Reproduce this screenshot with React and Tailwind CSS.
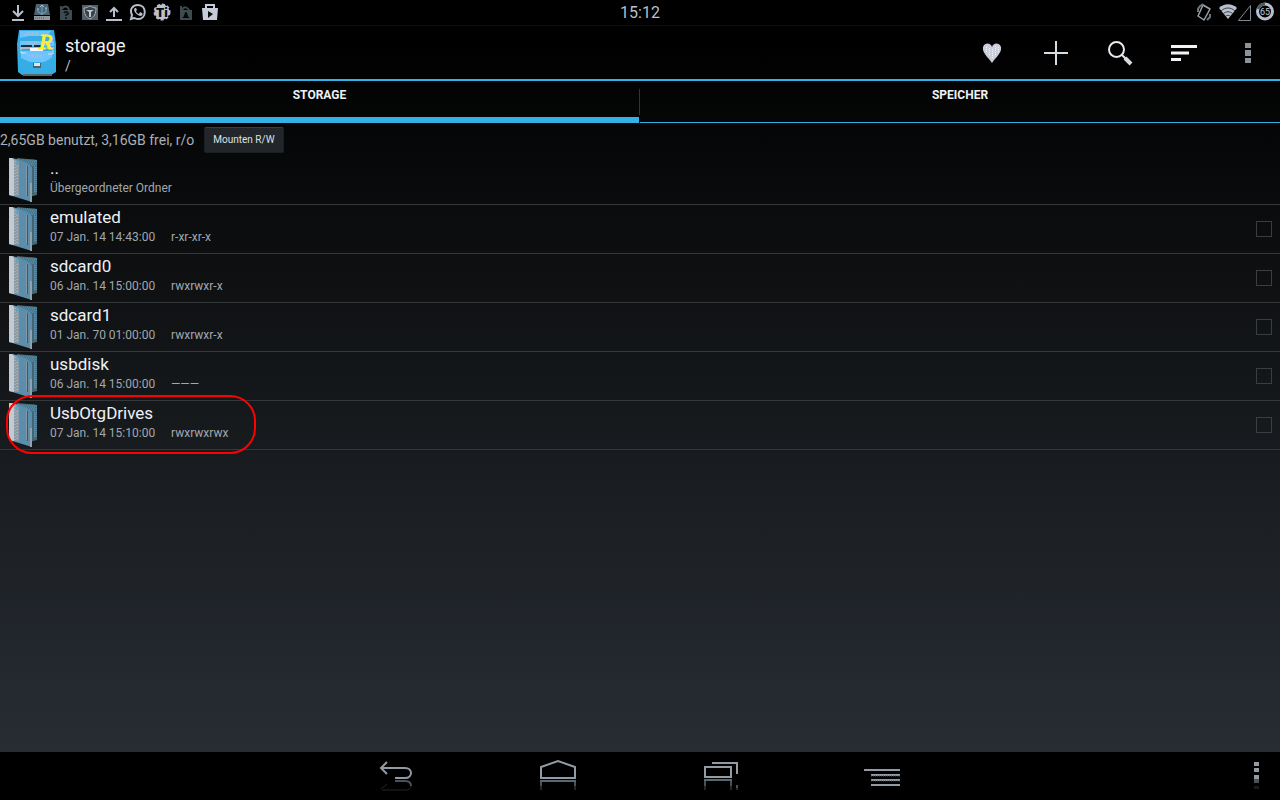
import { useState } from "react";

const TABS = ["STORAGE", "SPEICHER"];

const ENTRIES = [
  { name: "emulated", date: "07 Jan. 14 14:43:00", mode: "r-xr-xr-x" },
  { name: "sdcard0", date: "06 Jan. 14 15:00:00", mode: "rwxrwxr-x" },
  { name: "sdcard1", date: "01 Jan. 70 01:00:00", mode: "rwxrwxr-x" },
  { name: "usbdisk", date: "06 Jan. 14 15:00:00", mode: "———" },
  { name: "UsbOtgDrives", date: "07 Jan. 14 15:10:00", mode: "rwxrwxrwx", marked: true }
];

function FolderIcon() {
  return (
    <svg className="h-[46px] w-[30px] shrink-0" viewBox="0 0 30 46" aria-hidden="true">
      <path d="M8 1 28 3v35l-8 2-12-4z" fill="#4b6770" />
      <path d="M9 2 28 3v32l-5 1z" fill="#5288a5" />
      <path d="M11 3h15M14 5h13M19 7h8M22 9h5M27 5v31" stroke="#3f606d" strokeDasharray="1 1" />
      <path d="M24 9v29" stroke="#466470" strokeWidth="2" />
      <path d="M0 1 8 2l10 4 5 5v34L0 38z" fill="#5b8eac" />
      <path d="M0 1h4l6 4v34L0 38z" fill="#8f9ba4" />
      <path d="M0 1h3l2 2v36l-5-1z" fill="#c2cad4" />
      <path d="M6 4v34M8 6v32" stroke="#b5c0ca" strokeDasharray="1 2" />
      <path d="M17.500 9v29" stroke="#8a97a1" />
      <path d="M18.500 9v30" stroke="#3c5865" />
      <path d="M22 26v19" stroke="#93a3ae" strokeWidth="2" />
      <path d="M7 5h2v2H7z" fill="#34aee4" />
    </svg>
  );
}

function ExplorerLogo() {
  return (
    <svg className="h-[46px] w-10 shrink-0 overflow-visible" viewBox="0 0 40 46" aria-hidden="true">
      <path d="M2 0h35l2 14v28l-5 3H5l-4-3L0 14z" fill="#34aee4" />
      <path d="M3 1h31l-4 5H12L3 8zM4 21h31v7l-8 4H13l-9-4z" fill="#6fc4ff" />
      <path d="M3 11h34v5H3z" fill="#6fc4ff" />
      <path d="M10 3h12M7 5h14M9 12h12M11 14h9M10 25h17M14 27h12" stroke="#b0bccb" strokeDasharray="3 1" />
      <path d="M4 15h11v2H4zM17 15h7v2h-7z" fill="#17303c" />
      <path d="M4 20v-2h33" fill="none" stroke="#aeb9c4" strokeWidth="2" />
      <path d="M13 18h13v3H13z" fill="#f2f7fb" />
      <path d="M4 21v2h5M36 20v4h-5" fill="none" stroke="#d7e3ed" />
      <path d="M16 33h8v5h-8z" fill="#52616b" />
      <path d="M17 33h6v3h-6z" fill="#dce5ed" />
      <path d="M3 37v5h7M32 41h5M33 28h3" fill="none" stroke="#6d8fa2" strokeDasharray="1 2" />
      <path d="M6 45h29" stroke="#59666e" strokeWidth="2" />
      <text
        x="22"
        y="19"
        fill="#ffed36"
        stroke="#ffed36"
        fontFamily="'Liberation Serif', serif"
        fontSize="22"
        fontStyle="italic"
      >
        R
      </text>
    </svg>
  );
}

function StatusIcon({ children }) {
  return (
    <svg className="h-5 w-6 shrink-0" viewBox="0 0 24 20" fill="none" aria-hidden="true">
      {children}
    </svg>
  );
}

function NotificationIcons() {
  return (
    <div className="flex items-center pb-0.5 pl-1.5">
      <StatusIcon>
        <path d="M12 3v10M7 9l5 5 5-5" stroke="#b9bfcc" strokeWidth="2" />
        <path d="M6 18h12" stroke="#b9bfcc" strokeWidth="2" />
      </StatusIcon>
      <StatusIcon>
        <path d="M6 2h12l2 11H4z" fill="#50636c" />
        <path d="M4 14h16v4H4z" fill="#8d98a0" />
        <path d="M5 16h9" stroke="#4c5960" strokeDasharray="1 1" />
        <path d="M12 4v9M8 7v3l4 2 4-2V6" stroke="#65a9d3" />
        <path d="m10 5 2-2 2 2M7 7h2M15 6h2" stroke="#9ac4dd" />
      </StatusIcon>
      <StatusIcon>
        <path d="M6 8h12v10H6z" fill="#3d4b50" />
        <path d="M7 8V4M8 7c2-4 6-3 7 1" stroke="#3d4b50" strokeWidth="2" />
        <path d="M10 11c1-2 5-1 4 1l-2 1v1M12 15v2" stroke="#0b0d0e" strokeWidth="1.500" />
      </StatusIcon>
      <StatusIcon>
        <path d="M4 3h16v15H4z" fill="#516068" />
        <path d="M6 6c3 0 4-1 6-2 2 1 3 2 6 2 0 6-2 9-6 11-4-2-6-5-6-11z" fill="#36434a" stroke="#a7b1b9" />
        <path d="M8 8h8l-3 2v5h-2v-5z" fill="#c0c7d1" />
      </StatusIcon>
      <StatusIcon>
        <path d="M12 15V6M8 10l4-4 4 4" stroke="#b9bfcc" strokeWidth="2" />
        <path d="M4 18h16" stroke="#b9bfcc" strokeWidth="2" />
      </StatusIcon>
      <StatusIcon>
        <path d="m5 17 1-4C3 7 7 3 12 3c9 0 9 14 0 14-2 0-3-1-4-1z" stroke="#b9bfcc" strokeWidth="2" />
        <path d="M9 6c-3 2 2 8 6 8 2-1 2-2 1-3l-2-1-1 2c-1 0-3-2-3-3l1-1-1-2z" fill="#b9bfcc" />
      </StatusIcon>
      <StatusIcon>
        <circle cx="12" cy="10" r="7.500" fill="#b9bfcc" />
        <circle cx="12" cy="10" r="7.500" stroke="#b9bfcc" strokeWidth="2" strokeDasharray="3 2" />
        <text
          x="12"
          y="15"
          textAnchor="middle"
          fill="#050606"
          fontFamily="Roboto, sans-serif"
          fontSize="13"
          fontWeight="900"
        >
          Ti
        </text>
      </StatusIcon>
      <StatusIcon>
        <path d="M6 8h12v10H6z" fill="#3d4b50" />
        <path d="M7 8V4M8 8c2-4 5-3 7 0" stroke="#3d4b50" strokeWidth="2" />
        <path d="M8 16c3-1 2-6 4-6s1 5 4 6z" fill="#050606" />
      </StatusIcon>
      <StatusIcon>
        <path d="M4 6h16l-1 12H5z" fill="#c6ccd7" />
        <path d="M8 6V3h8v3" stroke="#c6ccd7" strokeWidth="2" />
        <path d="m10 9 5 3-5 4z" fill="#090b0c" />
      </StatusIcon>
    </div>
  );
}

function SystemIcons() {
  return (
    <svg className="h-6 w-[84px]" viewBox="0 0 84 24" fill="none" aria-hidden="true">
      <path d="m7 4 7 4-6 11-6-4z" stroke="#9aa4ab" strokeWidth="1.500" strokeLinejoin="round" />
      <path d="m3 6 4-3M2 11V8l2-3M11 19l3-3v-3" stroke="#6b777d" strokeWidth="2" />
      <path d="M23 7c5-5 13-5 18 0l-9 11z" fill="#b9bfcc" />
      <path d="M25 10c4-4 10-4 14 0M27 13c3-3 7-3 10 0M30 15c1-1 3-1 4 0" stroke="#33434a" />
      <path d="M54.500 4.500v15h-12z" stroke="#7f8a90" />
      <circle cx="69" cy="10.500" r="7.500" stroke="#b9bfcc" strokeWidth="3" />
      <path d="M69 3a7.500 7.500 0 0 0-7 5" stroke="#4c5a60" strokeWidth="3" />
      <text x="69" y="14" textAnchor="middle" fill="#c5cbd4" fontFamily="Roboto, sans-serif" fontSize="9">
        65
      </text>
    </svg>
  );
}

function ActionButton({ label, children }) {
  return (
    <button type="button" aria-label={label} className="flex h-[53px] w-16 items-center justify-center">
      <svg className="h-8 w-8" viewBox="0 0 32 32" fill="none">
        {children}
      </svg>
    </button>
  );
}

function NavButton({ label, children }) {
  return (
    <button type="button" aria-label={label} className="flex h-12 w-[162px] items-center justify-center">
      <svg className="h-12 w-10" viewBox="0 0 40 48" fill="none">
        {children}
      </svg>
    </button>
  );
}

function FileRow({ entry, checked, onToggle }) {
  return (
    <li className="relative flex h-[49px] items-center border-b border-[#34383b] pr-2">
      <button type="button" className="flex flex-1 items-center gap-[11px] pl-[9px] text-left">
        <FolderIcon />
        <span className="flex flex-col pb-1">
          <span className="text-[17px] leading-5 text-[#eef1f5]">{entry.name}</span>
          <span className="flex text-xs leading-5 text-[#a0a8ae]">
            <span className="w-[121px]">{entry.date}</span>
            <span>{entry.mode}</span>
          </span>
        </span>
      </button>
      <input
        type="checkbox"
        aria-label={entry.name}
        checked={checked}
        onChange={onToggle}
        className="h-4 w-4 appearance-none border border-[#3b3e41] checked:bg-[#33b5e5]"
      />
      {entry.marked && (
        <span className="pointer-events-none absolute -top-1.5 left-1.5 z-10 h-[59px] w-[250px] rounded-[26px] border-2 border-[#ff0000]" />
      )}
    </li>
  );
}

export default function App() {
  const [activeTab, setActiveTab] = useState("STORAGE");
  const [selected, setSelected] = useState([]);

  function toggle(name) {
    setSelected((prev) => (prev.includes(name) ? prev.filter((n) => n !== name) : [...prev, name]));
  }

  return (
    <div className="flex min-h-screen flex-col bg-black font-[Roboto,sans-serif] text-white">
      <div className="flex flex-1 flex-col bg-linear-to-b/srgb from-black from-5% via-[#16191c] via-55% to-[#282d34]">
        <div className="grid h-[26px] grid-cols-[1fr_auto_1fr] items-center border-b border-[#0b0d0e] bg-black">
          <NotificationIcons />
          <time className="text-base leading-6 text-[#b9bfcc]">15:12</time>
          <div className="flex justify-end">
            <SystemIcons />
          </div>
        </div>

        <header className="flex h-[55px] items-center border-b-2 border-[#33b0e6]">
          <div className="flex items-center gap-2 pl-[17px]">
            <ExplorerLogo />
            <div className="pt-1.5">
              <h1 className="text-lg leading-5 text-[#eef1f5]">storage</h1>
              <p className="text-sm leading-5 text-[#b9bfcc]">/</p>
            </div>
          </div>
          <div className="ml-auto flex">
            <ActionButton label="Lesezeichen">
              <path d="M16 10c1-4 7-5 9 0 1 6-5 10-9 16C12 20 6 16 7 10c2-5 8-4 9 0z" fill="#c9ced9" />
              <path
                d="M10.500 10v5M13.500 11v8M16.500 12v10M19.500 9v9M22.500 10v5"
                stroke="#f5f7fa"
                strokeDasharray="1 1"
              />
            </ActionButton>
            <ActionButton label="Neu">
              <path d="M16 4v24M4 16h24" stroke="#d5dae3" strokeWidth="2" />
            </ActionButton>
            <ActionButton label="Suchen">
              <circle cx="12.500" cy="12.500" r="7.500" stroke="#e6eaf0" strokeWidth="2" />
              <path d="m18 18 4 4" stroke="#e6eaf0" strokeWidth="2" />
              <path d="m21 21 6 6" stroke="#d5dae3" strokeWidth="4" />
            </ActionButton>
            <ActionButton label="Sortieren">
              <path d="M3 9.500h26M3 16h18M3 22.500h10" stroke="#f1f3f6" strokeWidth="3" />
            </ActionButton>
            <ActionButton label="Optionen">
              <path d="M13 6h6v5h-6zM13 13h6v6h-6zM13 21h6v5h-6z" fill="#8b949b" />
            </ActionButton>
          </div>
        </header>

        <div role="tablist" className="grid h-[42px] grid-cols-2">
          {TABS.map((tab, i) => (
            <div key={tab} className="flex">
              <button
                type="button"
                role="tab"
                aria-selected={activeTab === tab}
                onClick={() => setActiveTab(tab)}
                className={`flex flex-1 items-start justify-center border-[#33b0e6] pt-1.5 text-xs leading-4 font-bold text-[#eef1f5] ${
                  activeTab === tab ? "border-b-6" : "border-b"
                }`}
              >
                {tab}
              </button>
              {i === 0 && <span className="mt-2 h-[26px] w-px bg-[#303438]" />}
            </div>
          ))}
        </div>

        <div className="flex h-[33px] items-center gap-2.5">
          <p className="text-sm text-[#a9b0b7]">2,65GB benutzt, 3,16GB frei, r/o</p>
          <button
            type="button"
            className="h-[26px] rounded-xs border border-[#1b1f22] border-t-[#383c40] bg-[#22262a] px-2 text-[10px] text-[#dce0e5]"
          >
            Mounten R/W
          </button>
        </div>

        <ul>
          <li className="flex h-[49px] items-center border-b border-[#34383b]">
            <button type="button" className="flex flex-1 items-center gap-[11px] pl-[9px] text-left">
              <FolderIcon />
              <span className="flex flex-col pb-1">
                <span className="text-[17px] leading-5 text-[#eef1f5]">..</span>
                <span className="text-xs leading-5 text-[#a0a8ae]">Übergeordneter Ordner</span>
              </span>
            </button>
          </li>
          {ENTRIES.map((entry) => (
            <FileRow
              key={entry.name}
              entry={entry}
              checked={selected.includes(entry.name)}
              onToggle={() => toggle(entry.name)}
            />
          ))}
        </ul>
      </div>

      <nav className="grid h-12 grid-cols-[1fr_auto_1fr] bg-black">
        <span />
        <div className="flex">
          <NavButton label="Zurück">
            <path d="m10 10-6 6 6 6M4 16h24c8 0 8 10 0 10H18" stroke="#929aa4" strokeWidth="2" />
            <path d="M18 29h10c4 0 6 2 6 5" stroke="#46535a" strokeWidth="2" />
            <path d="M34 34c0 3-3 4-6 4H5M4 37l6-5" stroke="#20272a" />
          </NavButton>
          <NavButton label="Startseite">
            <path d="M2 26V15l17-6 17 6v11z" stroke="#929aa4" strokeWidth="2" />
            <path d="M1 29h36" stroke="#566970" strokeWidth="2" />
            <path d="M2 30v4M36 30v4" stroke="#46535a" strokeWidth="2" />
            <path d="M2 34v4M36 34v4" stroke="#20272a" strokeWidth="2" />
          </NavButton>
          <NavButton label="Letzte Apps">
            <path d="M4 15h26v10H4zM11 11h25v11" stroke="#929aa4" strokeWidth="2" />
            <path d="M3 28h28" stroke="#566970" strokeWidth="2" />
            <path d="M4 29v5M30 29v5M36 33v3" stroke="#46535a" strokeWidth="2" />
            <path d="M4 34v4M30 34v4M36 36v2" stroke="#20272a" strokeWidth="2" />
          </NavButton>
          <NavButton label="Menü">
            <path d="M1 18h36M8 23h29M8 28h29M8 33h29" stroke="#929aa4" strokeWidth="2" />
            <path d="M8 24h29M8 29h29" stroke="#465056" strokeDasharray="1 1" />
          </NavButton>
        </div>
        <button type="button" aria-label="Mehr" className="flex h-12 w-12 items-center justify-center justify-self-end">
          <svg className="h-12 w-6" viewBox="0 0 24 48">
            <path d="M10 10h5v4h-5zM10 16h5v4h-5zM10 23h5v4h-5z" fill="#929aa4" />
            <path d="M10 27h5v4h-5z" fill="#46535a" />
            <path d="M10 34h5v3h-5z" fill="#181c1e" />
          </svg>
        </button>
      </nav>
    </div>
  );
}
